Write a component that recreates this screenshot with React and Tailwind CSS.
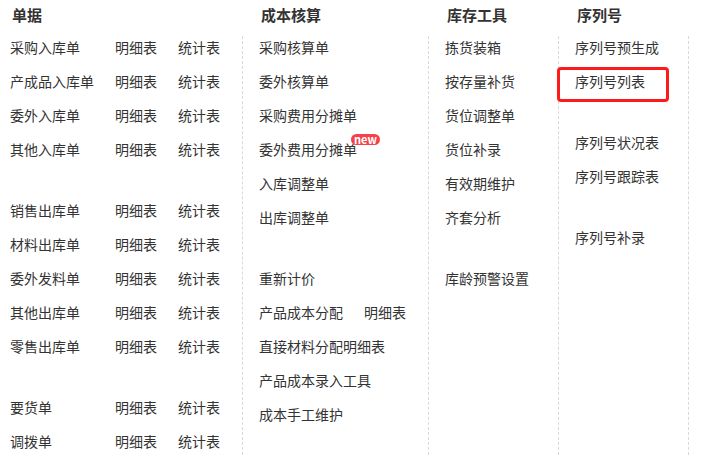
const font = { fontFamily: '"Microsoft YaHei", "Noto Sans CJK SC", sans-serif' };

const bills = [
  ["采购入库单", "产成品入库单", "委外入库单", "其他入库单"],
  ["销售出库单", "材料出库单", "委外发料单", "其他出库单", "零售出库单"],
  ["要货单", "调拨单"],
];

function Row({ children, className = "" }) {
  return <div className={`relative mb-3 h-[22px] shrink-0 leading-[22px] ${className}`}>{children}</div>;
}

function Gap() {
  return <div className="h-[27px] shrink-0" />;
}

function Header({ children, className = "" }) {
  return (
    <div className={`h-9 shrink-0 pt-[5px] text-[15px] font-bold leading-5 text-[#333] ${className}`}>
      {children}
    </div>
  );
}

function BillColumn() {
  return (
    <div className="flex w-[242px] shrink-0 flex-col">
      <Header className="pl-3">单据</Header>
      <div className="pl-[10px]">
        {bills.map((group, i) => (
          <div key={i}>
            {i > 0 && <Gap />}
            {group.map((name) => (
              <Row key={name} className="grid grid-cols-[105px_63px_auto]">
                <span>{name}</span>
                <span>明细表</span>
                <span>统计表</span>
              </Row>
            ))}
          </div>
        ))}
      </div>
    </div>
  );
}

function Column({ title, width, children, last }) {
  return (
    <div className={`flex shrink-0 flex-col ${width}`}>
      <Header className="pl-[19px]">{title}</Header>
      <div
        className={`flex-1 border-l border-dashed border-[#d9d9d9] pl-4 ${
          last ? "border-r" : ""
        }`}
      >
        {children}
      </div>
    </div>
  );
}

export default function App() {
  return (
    <div
      className="flex h-[455px] w-[705px] overflow-hidden bg-white text-sm text-[#333]"
      style={font}
    >
      <BillColumn />

      <Column title="成本核算" width="w-[186px]">
        <Row>采购核算单</Row>
        <Row>委外核算单</Row>
        <Row>采购费用分摊单</Row>
        <Row>
          委外费用分摊单
          <span className="absolute -top-1 left-[92px] flex h-[11px] w-[29px] items-center justify-center rounded-full bg-[#f5424a] text-[11px] font-bold leading-none text-white">
            new
          </span>
        </Row>
        <Row>入库调整单</Row>
        <Row>出库调整单</Row>
        <Gap />
        <Row>重新计价</Row>
        <Row className="flex">
          <span className="w-[105px]">产品成本分配</span>
          <span>明细表</span>
        </Row>
        <Row>直接材料分配明细表</Row>
        <Row>产品成本录入工具</Row>
        <Row>成本手工维护</Row>
      </Column>

      <Column title="库存工具" width="w-[130px]">
        <Row>拣货装箱</Row>
        <Row>按存量补货</Row>
        <Row>货位调整单</Row>
        <Row>货位补录</Row>
        <Row>有效期维护</Row>
        <Row>齐套分析</Row>
        <Gap />
        <Row>库龄预警设置</Row>
      </Column>

      <Column title="序列号" width="w-[131px]" last>
        <Row>序列号预生成</Row>
        <Row>
          序列号列表
          <span className="absolute -left-[18px] -top-[3px] h-[35px] w-[112px] rounded-[4px] border-[3px] border-[#ff1a1a]" />
        </Row>
        <Gap />
        <Row>序列号状况表</Row>
        <Row>序列号跟踪表</Row>
        <Gap />
        <Row>序列号补录</Row>
      </Column>
    </div>
  );
}
